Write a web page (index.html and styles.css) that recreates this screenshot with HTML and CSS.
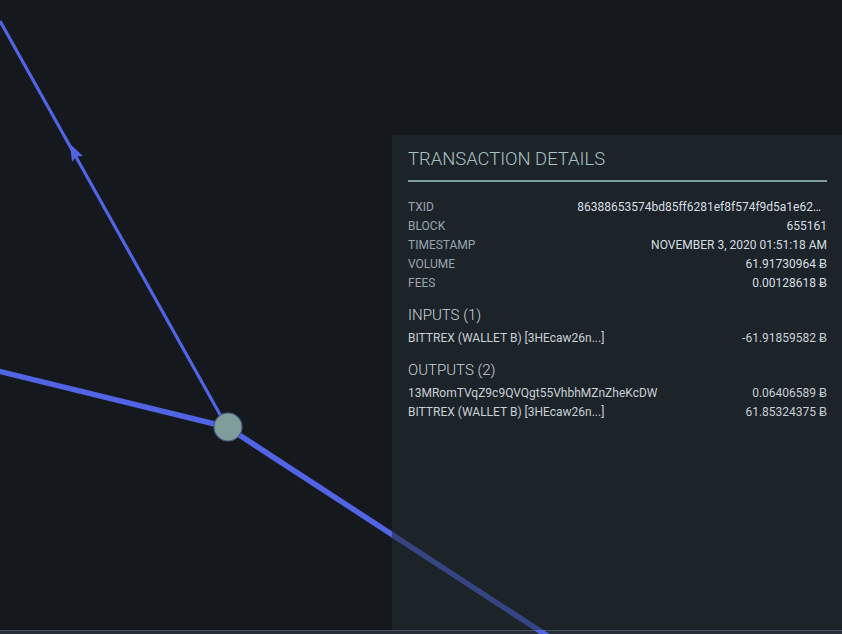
FILE: index.html
```html
<!DOCTYPE html>
<html lang="en">
<head>
<meta charset="utf-8">
<title>Transaction details</title>
<link rel="stylesheet" href="styles.css">
</head>
<body>
<div class="stage">
  <div class="canvas">
    <svg class="graph" width="842" height="634" viewBox="0 0 842 634" xmlns="http://www.w3.org/2000/svg">
      <line x1="0" y1="21" x2="227" y2="427" stroke="#5064e4" stroke-width="3.2"/>
      <path d="M70 144 L83 156 L76 156.5 L72 162 Z" fill="#5064e4"/>
      <line x1="-2" y1="371" x2="227" y2="427" stroke="#5064e4" stroke-width="5.5"/>
      <line x1="227" y1="427" x2="560" y2="644" stroke="#5064e4" stroke-width="5.5"/>
      <circle cx="228" cy="427" r="14" fill="#7f9e9b" stroke="#4b5c86" stroke-width="1.2"/>
    </svg>
    <aside class="panel">
      <h1 class="panel-title">TRANSACTION DETAILS</h1>
      <dl class="facts">
        <div class="fact"><dt>TXID</dt><dd class="txid">86388653574bd85ff6281ef8f574f9d5a1e62…</dd></div>
        <div class="fact"><dt>BLOCK</dt><dd>655161</dd></div>
        <div class="fact"><dt>TIMESTAMP</dt><dd>NOVEMBER 3, 2020 01:51:18 AM</dd></div>
        <div class="fact"><dt>VOLUME</dt><dd>61.91730964 Ƀ</dd></div>
        <div class="fact"><dt>FEES</dt><dd>0.00128618 Ƀ</dd></div>
      </dl>
      <h2 class="section-title">INPUTS (1)</h2>
      <ul class="entries">
        <li class="entry"><span class="who">BITTREX (WALLET B) [3HEcaw26n...]</span><span class="amt">-61.91859582 Ƀ</span></li>
      </ul>
      <h2 class="section-title">OUTPUTS (2)</h2>
      <ul class="entries">
        <li class="entry"><span class="who">13MRomTVqZ9c9QVQgt55VhbhMZnZheKcDW</span><span class="amt">0.06406589 Ƀ</span></li>
        <li class="entry"><span class="who">BITTREX (WALLET B) [3HEcaw26n...]</span><span class="amt">61.85324375 Ƀ</span></li>
      </ul>
    </aside>
  </div>
  <div class="bottom-bar"></div>
</div>
</body>
</html>
```

FILE: styles.css
```css
* { box-sizing: border-box; }
html, body {
  margin: 0;
  padding: 0;
  background: #15191d;
  font-family: Roboto, "Liberation Sans", sans-serif;
}
.stage {
  width: 842px;
  height: 634px;
  display: flex;
  flex-direction: column;
  overflow: hidden;
}
.canvas {
  position: relative;
  flex: 1;
  background: #15191d;
}
.graph {
  position: absolute;
  left: 0;
  top: 0;
  display: block;
}
.panel {
  position: absolute;
  top: 135px;
  right: 0;
  bottom: 0;
  width: 450px;
  padding: 12px 15px 0 16px;
  background: rgba(33, 43, 51, 0.56);
}
.panel-title {
  margin: 0;
  font-size: 18.4px;
  font-weight: 300;
  line-height: 24px;
  color: #a8c2c1;
  padding-bottom: 9px;
  border-bottom: 2px solid #7f9e9b;
}
.facts {
  margin: 15px 0 0;
  padding: 0;
}
.fact {
  display: flex;
  justify-content: space-between;
  align-items: center;
  height: 19px;
  font-size: 12px;
}
.fact dt {
  color: #9aa5ae;
  flex: none;
}
.fact dd {
  margin: 0;
  color: #d8dfe4;
  white-space: nowrap;
}
.fact dd.txid {
  margin-right: 6px;
}
.section-title {
  margin: 13px 0 3px;
  font-size: 15px;
  font-weight: 300;
  line-height: 20px;
  color: #cbd3d8;
}
.entries {
  list-style: none;
  margin: 0;
  padding: 0;
}
.entry {
  display: flex;
  justify-content: space-between;
  align-items: center;
  height: 19px;
  font-size: 12px;
  color: #c9d0d6;
}
.bottom-bar {
  height: 4px;
  flex: none;
  background: #272e37;
  border-top: 1px solid #46515e;
}
```
